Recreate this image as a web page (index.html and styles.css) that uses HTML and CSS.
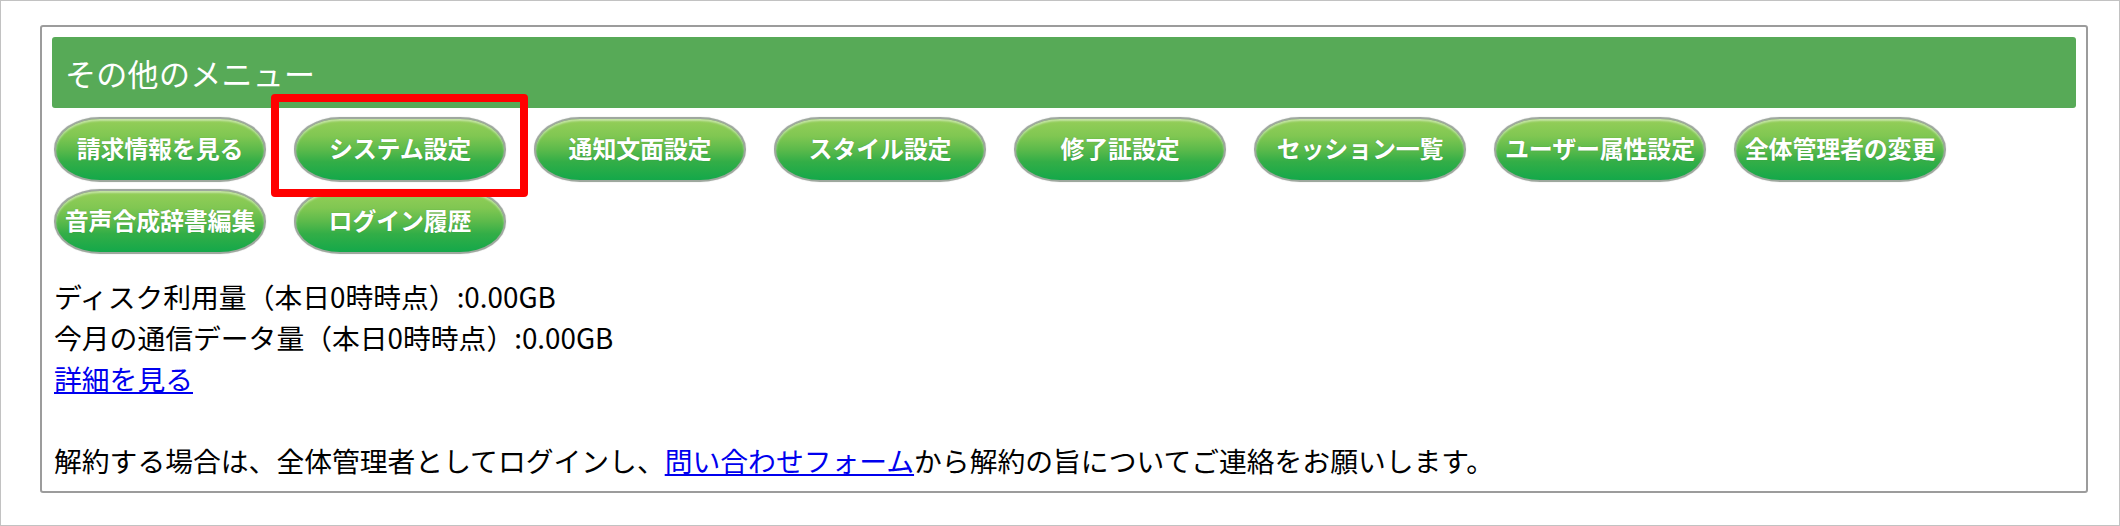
FILE: index.html
```html
<!DOCTYPE html>
<html lang="ja">
<head>
<meta charset="utf-8">
<title>その他のメニュー</title>
<link rel="stylesheet" href="styles.css">
</head>
<body>
<div class="frame">
  <div class="box">
    <div class="box-head">その他のメニュー</div>
    <div class="btns">
      <a class="btn">請求情報を見る</a>
      <a class="btn">システム設定</a>
      <a class="btn">通知文面設定</a>
      <a class="btn">スタイル設定</a>
      <a class="btn">修了証設定</a>
      <a class="btn">セッション一覧</a>
      <a class="btn">ユーザー属性設定</a>
      <a class="btn">全体管理者の変更</a>
      <a class="btn">音声合成辞書編集</a>
      <a class="btn">ログイン履歴</a>
    </div>
    <div class="info">
      ディスク利用量（本日0時時点）:0.00GB<br>
      今月の通信データ量（本日0時時点）:0.00GB<br>
      <a href="#" class="link">詳細を見る</a><br>
      <br>
      解約する場合は、全体管理者としてログインし、<a href="#" class="link">問い合わせフォーム</a>から解約の旨についてご連絡をお願いします。
    </div>
  </div>
  <div class="highlight"></div>
</div>
</body>
</html>
```
FILE: styles.css
```css
html, body {
  margin: 0;
  padding: 0;
  background: #fff;
}
body {
  font-family: "Noto Sans CJK JP", "Noto Sans", sans-serif;
  color: #000;
}
.frame {
  position: relative;
  width: 2120px;
  height: 526px;
  box-sizing: border-box;
  border: 1px solid #c2c2c2;
  padding: 24px 31px 0 39px;
}
.box {
  border: 2px solid #9c9c9c;
  border-radius: 3px;
  padding: 10px;
}
.box-head {
  height: 71px;
  display: flex;
  align-items: center;
  padding-left: 13px;
  background: #57aa57;
  border-radius: 3px;
  color: #fff;
  font-size: 31px;
  font-weight: 400;
  letter-spacing: 0.3px;
}
.btns {
  display: flex;
  flex-wrap: wrap;
  column-gap: 28px;
  row-gap: 7px;
  margin-top: 9px;
  padding-left: 2px;
}
.btn {
  width: 212px;
  height: 65px;
  box-sizing: border-box;
  display: flex;
  align-items: center;
  justify-content: center;
  padding-bottom: 5px;
  border: 2px solid #9ea89e;
  border-radius: 46px / 32px;
  background: linear-gradient(#95ce58 0%, #80c752 28%, #5cba4b 50%, #33ae47 70%, #14a84a 100%);
  box-shadow: inset 0 2px 2px rgba(255,255,255,0.45), 0 0 1px rgba(0,0,0,0.3);
  color: #fff;
  font-size: 24px;
  font-weight: 700;
  white-space: nowrap;
  text-shadow: 0 0 1px rgba(0,60,0,0.35);
  letter-spacing: -0.2px;
}
.info {
  margin-top: 22px;
  padding-left: 2px;
  font-size: 27.8px;
  line-height: 41px;
}
.link {
  color: #0000ee;
  text-decoration: underline;
}
.highlight {
  position: absolute;
  left: 270px;
  top: 93px;
  width: 257px;
  height: 103px;
  box-sizing: border-box;
  border: 8px solid #ff0000;
  border-radius: 4px;
}
```
